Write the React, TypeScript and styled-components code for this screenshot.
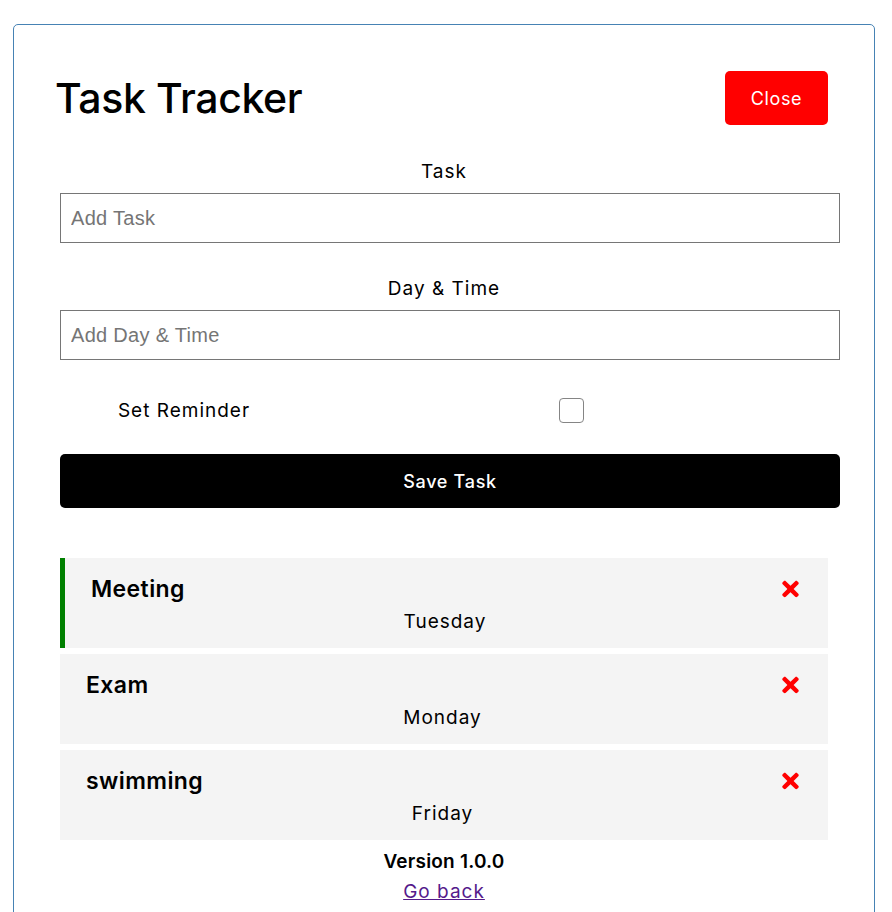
import { useState } from 'react';
import styled, { createGlobalStyle } from 'styled-components';
import { FaTimes } from 'react-icons/fa';

interface Task {
  id: number;
  text: string;
  day: string;
  reminder: boolean;
}

const initialTasks: Task[] = [
  { id: 1, text: 'Meeting', day: 'Tuesday', reminder: true },
  { id: 2, text: 'Exam', day: 'Monday', reminder: false },
  { id: 3, text: 'swimming', day: 'Friday', reminder: false },
];

const App = () => {
  const [tasks, setTasks] = useState<Task[]>(initialTasks);
  const [reminder, setReminder] = useState(false);

  return (
    <>
      <GlobalStyle />
      <Container>
        <Header>
          <Title>Task Tracker</Title>
          <CloseButton type="button">Close</CloseButton>
        </Header>

        <Form onSubmit={(e) => e.preventDefault()}>
          <FormControl>
            <Label>Task</Label>
            <TextInput type="text" placeholder="Add Task" />
          </FormControl>
          <FormControl>
            <Label>Day &amp; Time</Label>
            <TextInput type="text" placeholder="Add Day & Time" />
          </FormControl>
          <CheckRow>
            <CheckLabel>Set Reminder</CheckLabel>
            <CheckCell>
              <Checkbox
                type="checkbox"
                checked={reminder}
                onChange={(e) => setReminder(e.target.checked)}
              />
            </CheckCell>
          </CheckRow>
          <SaveButton type="submit">Save Task</SaveButton>
        </Form>

        <TaskList>
          {tasks.map((task) => (
            <TaskItem key={task.id} reminder={task.reminder}>
              <TaskTitle>
                {task.text}
                <DeleteIcon onClick={() => setTasks(tasks.filter((t) => t.id !== task.id))} />
              </TaskTitle>
              <TaskDay>{task.day}</TaskDay>
            </TaskItem>
          ))}
        </TaskList>

        <Footer>
          <Version>Version 1.0.0</Version>
          <BackLink href="#about">Go back</BackLink>
        </Footer>
      </Container>
    </>
  );
};

export default App;

const GlobalStyle = createGlobalStyle`
  * {
    box-sizing: border-box;
  }
  body {
    margin: 0;
    background: #fff;
    font-family: Inter, "Noto Sans", sans-serif;
    color: #000;
  }
`;

const Container = styled.div`
  width: 862px;
  margin: 24px 0 0 13px;
  padding: 46px 41px 30px;
  border: 1px solid steelblue;
  border-radius: 5px;
  min-height: 900px;
`;

const Header = styled.header`
  display: flex;
  align-items: center;
  justify-content: space-between;
  height: 54px;
`;

const Title = styled.h1`
  margin: 0;
  font-size: 41px;
  font-weight: 500;
  letter-spacing: -0.4px;
`;

const CloseButton = styled.button`
  width: 103px;
  height: 54px;
  margin-right: 5px;
  border: none;
  border-radius: 5px;
  background: #ff0000;
  color: #fff;
  font-family: inherit;
  font-size: 18px;
  letter-spacing: 0.6px;
  cursor: pointer;
`;

const Form = styled.form`
  display: flex;
  flex-direction: column;
  margin-top: 34px;
`;

const FormControl = styled.div`
  display: flex;
  flex-direction: column;
  & + & {
    margin-top: 33px;
  }
`;

const Label = styled.label`
  display: block;
  text-align: center;
  font-size: 19px;
  letter-spacing: 1px;
  line-height: 26px;
`;

const TextInput = styled.input`
  width: 780px;
  height: 50px;
  margin: 8px 0 0 5px;
  padding: 3px 10px;
  border: 1px solid #767676;
  border-radius: 0;
  font-family: "Liberation Sans", Arial, sans-serif;
  font-size: 20px;
  letter-spacing: 0.3px;
  outline: none;
  &::placeholder {
    color: #757575;
  }
`;

const CheckRow = styled.div`
  display: flex;
  align-items: center;
  height: 40px;
  margin-top: 30px;
`;

const CheckLabel = styled.label`
  flex: 1;
  text-align: center;
  font-size: 19px;
  letter-spacing: 1px;
`;

const CheckCell = styled.div`
  flex: 2;
  display: flex;
  justify-content: center;
  padding-right: 4px;
`;

const Checkbox = styled.input`
  appearance: none;
  width: 25px;
  height: 25px;
  margin: 0;
  border: 1.5px solid #858585;
  border-radius: 4px;
  background: #fff;
  cursor: pointer;
  &:checked {
    background: #0075ff;
    border-color: #0075ff;
  }
`;

const SaveButton = styled.button`
  width: 780px;
  height: 54px;
  margin: 24px 0 0 5px;
  border: none;
  border-radius: 5px;
  background: #000;
  color: #fff;
  font-family: inherit;
  font-size: 18px;
  font-weight: 500;
  letter-spacing: 0.7px;
  cursor: pointer;
`;

const TaskList = styled.div`
  display: flex;
  flex-direction: column;
  gap: 6px;
  margin: 50px 5px 0;
`;

const TaskItem = styled.div<{ reminder: boolean }>`
  height: 90px;
  padding: 16px 29px 0 26px;
  background: #f4f4f4;
  border-left: ${({ reminder }) => (reminder ? '5px solid green' : 'none')};
  cursor: pointer;
`;

const TaskTitle = styled.h3`
  display: flex;
  align-items: center;
  justify-content: space-between;
  margin: 0;
  font-size: 23px;
  font-weight: 600;
  letter-spacing: 0.4px;
  line-height: 30px;
`;

const DeleteIcon = styled(FaTimes)`
  width: 17px;
  height: 24px;
  color: red;
  cursor: pointer;
`;

const TaskDay = styled.p`
  margin: 5px 0 0;
  text-align: center;
  font-size: 19px;
  letter-spacing: 1px;
  line-height: 26px;
`;

const Footer = styled.footer`
  display: flex;
  flex-direction: column;
  align-items: center;
  margin-top: 10px;
`;

const Version = styled.p`
  margin: 0;
  font-size: 19px;
  font-weight: 600;
  letter-spacing: 0.2px;
  line-height: 24px;
`;

const BackLink = styled.a`
  margin-top: 6px;
  font-size: 19px;
  letter-spacing: 1px;
  line-height: 24px;
  color: #551a8b;
`;
